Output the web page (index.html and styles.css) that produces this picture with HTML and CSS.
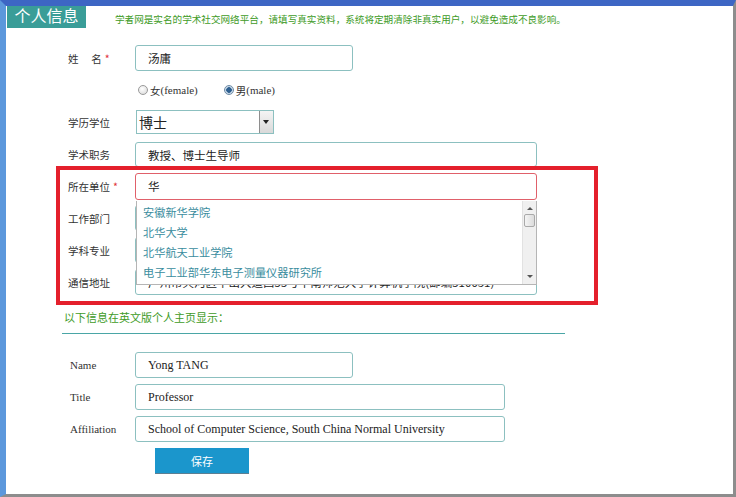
FILE: index.html
```html
<!DOCTYPE html>
<html lang="zh-CN">
<head>
  <meta charset="UTF-8" />
  <title>个人信息</title>
  <link rel="stylesheet" href="styles.css">
</head>
<body>

<div class="window">
  <div class="head">
    <div class="tab">个人信息</div>
    <div class="notice">学者网是实名的学术社交网络平台，请填写真实资料，系统将定期清除非真实用户，以避免造成不良影响。</div>
  </div>

  <form class="info" autocomplete="off" onsubmit="return false;">
    <div class="row">
      <label class="lbl">姓&emsp;&nbsp;名<span class="req">*</span></label>
      <input class="txt short" type="text" value="汤庸" />
    </div>

    <div class="row">
      <span class="lbl"></span>
      <div class="radios">
        <span class="radio"><i class="dot"></i>女<span class="en">(female)</span></span>
        <span class="radio"><i class="dot on"></i>男<span class="en">(male)</span></span>
      </div>
    </div>

    <div class="row">
      <label class="lbl">学历学位</label>
      <div class="select">
        <span class="select-val">博士</span>
        <span class="select-btn"></span>
      </div>
    </div>

    <div class="row">
      <label class="lbl">学术职务</label>
      <input class="txt long low" type="text" value="教授、博士生导师" />
    </div>

    <div class="row">
      <label class="lbl">所在单位<span class="req">*</span></label>
      <input class="txt long err" type="text" value="华" />
    </div>

    <div class="row">
      <label class="lbl">工作部门</label>
      <input class="txt long" type="text" value="计算机学院" />
    </div>

    <div class="row">
      <label class="lbl">学科专业</label>
      <input class="txt long" type="text" value="计算机软件与理论" />
    </div>

    <div class="row">
      <label class="lbl">通信地址</label>
      <input class="txt long addr" type="text" value="广州市天河区中山大道西55号华南师范大学计算机学院(邮编510631)" />
    </div>

    <!-- 单位联想下拉 -->
    <ul class="suggest">
      <li>安徽新华学院</li>
      <li>北华大学</li>
      <li>北华航天工业学院</li>
      <li>电子工业部华东电子测量仪器研究所</li>
      <span class="sbar">
        <span class="sb-up"></span>
        <span class="sb-thumb"></span>
        <span class="sb-down"></span>
      </span>
    </ul>
    <div class="mark"></div>

    <div class="sub">以下信息在英文版个人主页显示：</div>

    <div class="en-rows">
      <div class="row">
        <label class="lbl serif">Name</label>
        <input class="txt short serif" type="text" value="Yong TANG" />
      </div>
      <div class="row">
        <label class="lbl serif">Title</label>
        <input class="txt mid serif" type="text" value="Professor" />
      </div>
      <div class="row">
        <label class="lbl serif">Affiliation</label>
        <input class="txt mid serif" type="text" value="School of Computer Science, South China Normal University" />
      </div>
      <button class="save" type="button">保存</button>
    </div>
  </form>
</div>

</body>
</html>
```

FILE: styles.css
```css
* {
  box-sizing: border-box;
}
body {
  margin: 0;
  font-family: "Noto Sans CJK SC", "Noto Sans", sans-serif;
  font-size: 12px;
  color: #333;
  background: #fff;
}
.window {
  width: 736px;
  height: 497px;
  border-top: 6px solid #3d66c4;
  border-left: 6px solid #5c98dc;
  border-right: 3px solid #8d8d8d;
  border-bottom: 3px solid #8d8d8d;
  background: #fff;
  overflow: hidden;
}
.head {
  display: flex;
  align-items: flex-end;
  margin-top: -3px;
}
.tab {
  margin-left: 1px;
  width: 79px;
  height: 25px;
  line-height: 25px;
  background: #3a9d98;
  color: #fff;
  font-size: 16px;
  text-align: center;
}
.notice {
  margin-left: 29px;
  margin-bottom: 2px;
  font-size: 9.6px;
  color: #3e9b27;
  white-space: nowrap;
}

.info {
  position: relative;
  padding-left: 62px;
  margin-top: 17px;
}
.row {
  display: flex;
  align-items: center;
  height: 26px;
  margin-bottom: 6px;
}
.lbl {
  width: 67px;
  font-size: 10.5px;
  color: #333;
  flex: none;
}
.req {
  color: #e0313a;
  margin-left: 3px;
}
.txt {
  height: 26px;
  padding: 0 12px;
  border: 1px solid #8cc0c0;
  border-radius: 3px;
  font-family: "Noto Sans CJK SC", sans-serif;
  font-size: 11.5px;
  color: #222;
  background: #fff;
  outline: none;
}
.short { width: 218px; }
.long { width: 402px; }
.mid { width: 370px; }
.low { height: 25px; margin-top: 1px; }
.err {
  height: 27px;
  border-color: #e0606a;
}
.serif {
  font-family: "Liberation Serif", "Noto Sans CJK SC", serif;
}
input.serif {
  font-size: 12px;
}

.radios {
  display: flex;
  gap: 26px;
  padding-left: 3px;
  font-size: 10.5px;
}
.radio {
  display: flex;
  align-items: center;
}
.radio .en {
  font-family: "Liberation Serif", serif;
  font-size: 11px;
}
.dot {
  width: 10px;
  height: 10px;
  margin-right: 2px;
  border-radius: 50%;
  border: 1px solid #9a9a9a;
  background: radial-gradient(circle at 40% 35%, #fff, #d6d6d6);
}
.dot.on {
  border-color: #6d8aa5;
  background: radial-gradient(circle, #2d5f8f 0 2.5px, #b9cde0 3px, #e8eff6 5px);
}

.select {
  display: flex;
  width: 138px;
  height: 24px;
  margin-left: 1px;
  border: 1px solid #8cc0c0;
  background: #fff;
}
.select-val {
  flex: 1;
  padding-left: 2px;
  line-height: 22px;
  font-size: 14px;
  color: #222;
}
.select-btn {
  position: relative;
  width: 14px;
  border-left: 1px solid #8e8e8e;
  background: linear-gradient(#f4f4f4, #d9d9d9);
}
.select-btn::after {
  content: "";
  position: absolute;
  left: 3px;
  top: 9px;
  border: 3.5px solid transparent;
  border-top: 4px solid #222;
}

.suggest {
  position: absolute;
  left: 130px;
  top: 156px;
  width: 401px;
  height: 84px;
  margin: 0;
  padding: 1px 0 0 6px;
  list-style: none;
  background: #fff;
  border: 1px solid #b5b5b5;
  border-top: none;
}
.suggest li {
  height: 20px;
  line-height: 20px;
  font-size: 11.2px;
  color: #3a8d9e;
}
.sbar {
  position: absolute;
  right: 0;
  top: 0;
  bottom: 0;
  width: 14px;
  background: #f0f0f0;
  border-left: 1px solid #e2e2e2;
}
.sb-up, .sb-down {
  position: absolute;
  left: 4px;
  border: 3px solid transparent;
}
.sb-up {
  top: 3px;
  border-bottom: 3px solid #555;
}
.sb-down {
  bottom: 3px;
  border-top: 3px solid #555;
}
.sb-thumb {
  position: absolute;
  left: 1px;
  top: 13px;
  width: 11px;
  height: 13px;
  border: 1px solid #a9a9a9;
  border-radius: 2px;
  background: linear-gradient(90deg, #f4f4f4, #dcdcdc);
}
.mark {
  position: absolute;
  left: 50px;
  top: 121px;
  width: 542px;
  height: 139px;
  border: 4px solid #e4202c;
  pointer-events: none;
}

.sub {
  margin-top: 14px;
  margin-left: -6px;
  width: 503px;
  padding: 0 0 8px 2px;
  border-bottom: 1px solid #4aa6a6;
  font-size: 11px;
  color: #3e9b27;
}
.en-rows {
  margin-top: 18px;
  padding-left: 2px;
}
.en-rows .lbl {
  width: 65px;
  font-size: 11px;
}
.save {
  display: block;
  margin: 1px 0 0 85px;
  width: 94px;
  height: 26px;
  border: none;
  border-bottom: 1px solid #5c7f93;
  background: #1b96cc;
  color: #fff;
  font-family: "Noto Sans CJK SC", sans-serif;
  font-size: 11px;
  cursor: pointer;
}
```
